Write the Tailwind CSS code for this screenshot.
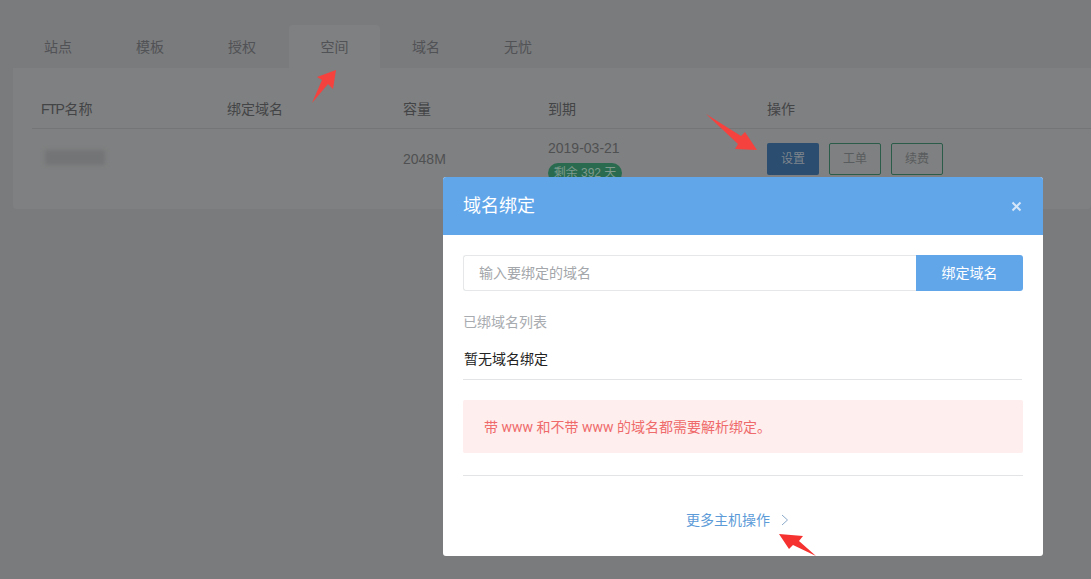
<!DOCTYPE html>
<html lang="zh"><head><meta charset="utf-8">
<script src="https://cdn.jsdelivr.net/npm/@tailwindcss/browser@4"></script>
</head>
<body class="relative w-[1091px] h-[579px] overflow-hidden bg-[#7a7b7d] text-sm text-[#4a4b4d] font-['Liberation_Sans','Noto_Sans_CJK_SC',sans-serif]">
<div class="pt-[25px] pl-[13px]">
  <div class="flex h-[43px] -ml-[1px] text-[#515255]">
    <div class="w-[92px] flex items-center justify-center pt-[1px]">站点</div>
    <div class="w-[92px] flex items-center justify-center pt-[1px]">模板</div>
    <div class="w-[92px] flex items-center justify-center pt-[1px]">授权</div>
    <div class="w-[91px] ml-[1px] flex items-center justify-center pt-[1px] bg-[#7f8081] rounded-t">空间</div>
    <div class="w-[92px] flex items-center justify-center pt-[1px]">域名</div>
    <div class="w-[92px] flex items-center justify-center pt-[1px]">无忧</div>
  </div>
  <div class="h-[141px] bg-[#7f8081] rounded-b pl-[19px] pt-[22px]">
    <div class="flex h-[39px] items-center border-b border-[#747577] pl-[9px] text-[#434446]">
      <div class="w-[186px]"><span class="tracking-[-1.3px] mr-[1px]">FTP</span>名称</div>
      <div class="w-[176px]">绑定域名</div>
      <div class="w-[145px]">容量</div>
      <div class="w-[219px]">到期</div>
      <div>操作</div>
    </div>
    <div class="flex pl-[9px] text-[#4f5052]">
      <div class="w-[362px] pt-[21px]"><div class="ml-[4px] w-[60px] h-[15px] bg-[#737476] blur-[2px]"></div></div>
      <div class="w-[145px] pt-[20px]">2048M</div>
      <div class="w-[219px] pt-[9px]">
        <div class="h-[20px] leading-[20px]">2019-03-21</div>
        <div class="mt-[5px] w-[74px] h-[20px] rounded-full bg-[#2a6b50] text-[#7f9a8d] text-center leading-[20px] text-xs">剩余 392 天</div>
      </div>
      <div class="flex gap-[10px] pt-[14px] text-xs">
        <div class="w-[52px] h-[32px] rounded-[2px] bg-[#2a4d70] text-[#7f858c] flex items-center justify-center">设置</div>
        <div class="w-[52px] h-[32px] rounded-[2px] border border-[#2a5c49] text-[#595c5e] flex items-center justify-center">工单</div>
        <div class="w-[52px] h-[32px] rounded-[2px] border border-[#2a5c49] text-[#595c5e] flex items-center justify-center">续费</div>
      </div>
    </div>
  </div>
</div>

<div class="absolute left-[443px] top-[177px] w-[600px] h-[379px] bg-white rounded-[3px] overflow-hidden">
  <div class="h-[58px] bg-[#62a6ea] flex items-center justify-between pl-[20px] pr-[21px] text-white">
    <span class="text-lg">域名绑定</span>
    <svg class="w-[11px] h-[11px]" viewBox="0 0 11 11"><path d="M1.5 1.5l8 8M9.5 1.5l-8 8" stroke="#d5e6f8" stroke-width="2"/></svg>
  </div>
  <div class="px-[20px] pt-[20px]">
    <div class="flex h-[36px]">
      <div class="flex-1 border border-[#e6e7e9] border-r-0 rounded-l-[3px] pl-[15px] flex items-center text-[#a3a6aa]">输入要绑定的域名</div>
      <div class="w-[107px] bg-[#62a6ea] rounded-r-[3px] text-white flex items-center justify-center">绑定域名</div>
    </div>
    <div class="mt-[22px] leading-[18px] text-[#a8abaf]">已绑域名列表</div>
    <div class="mt-[19px] h-[30px] border-b border-[#e3e4e6] mr-[1px] pl-[1px] leading-[18px] text-[#222]">暂无域名绑定</div>
    <div class="mt-[20px] h-[53px] bg-[#feeeee] rounded-[2px] pl-[21px] flex items-center text-[#ef6a6a] font-['Roboto','Noto_Sans_CJK_SC',sans-serif]">带 www 和不带 www 的域名都需要解析绑定。</div>
    <div class="mt-[22px] border-t border-[#e3e4e6]"></div>
    <div class="mt-[35px] flex items-center justify-center gap-[11px] pr-[11px] leading-[18px] text-[#5c9bd8]">
      <span>更多主机操作</span>
      <svg class="w-[8px] h-[12px]" viewBox="0 0 8 12"><path d="M1 1l5.5 5L1 11" fill="none" stroke="#8aa9c8" stroke-width="1"/></svg>
    </div>
  </div>
</div>

<svg class="absolute left-0 top-0 pointer-events-none" width="1091" height="579" viewBox="0 0 1091 579">
  <path d="M336 70 L333 89 L328 84 L312 103 L322 80 L317 77 Z" fill="#f5423f"/>
  <path d="M706 114 L741 136 L745 132 L757 150 L735 149 L738 144 Z" fill="#f5423f"/>
  <path d="M779 534 L803 536 L799 541 L816 556 L793 545 L789 549 Z" fill="#f5322f"/>
</svg>
</body></html>
